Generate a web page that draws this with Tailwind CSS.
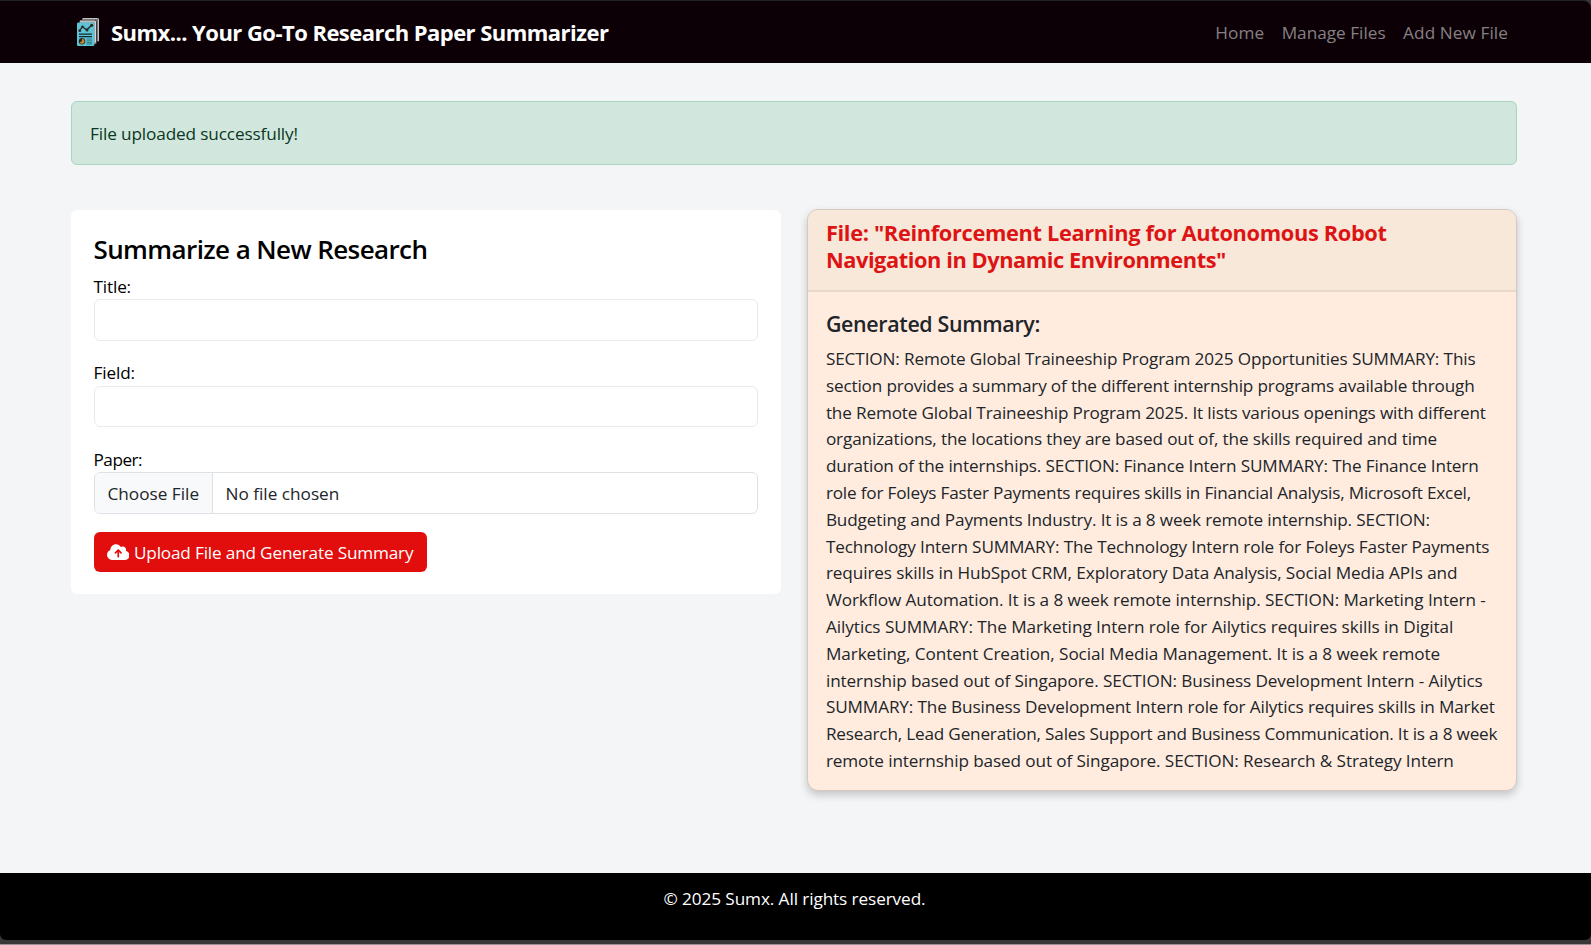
<!DOCTYPE html>
<html lang="en">
<head>
<meta charset="utf-8">
<title>Sumx</title>
<script src="https://cdn.jsdelivr.net/npm/@tailwindcss/browser@4"></script>
</head>
<body class="flex h-[945px] flex-col overflow-hidden bg-[#f3f5f7] font-['Open_Sans','Noto_Sans',sans-serif] text-[17.2px] leading-[26.8px] text-[#212529]">
<header class="h-[63px] shrink-0 bg-[#3a3a3c]">
  <nav class="flex h-[63px] items-center justify-between rounded-tr-lg border-t border-[#222024] bg-[#0c0006] pr-[83px] pl-[77px] text-white">
    <a class="flex items-center">
      <svg class="h-[28px] w-[22px]" viewBox="0 0 22 28">
        <rect x="5" y="0" width="17" height="23.500" rx="1" fill="#77777a"/>
        <path d="M6 .5h14.500M21.500 1v22" stroke="#c4c4c6" stroke-width="1"/>
        <rect x="2.500" y="2.500" width="17" height="23.500" rx="1" fill="#a6a6a8" stroke="#26262a" stroke-width=".8"/>
        <path d="M3 3h15M18.500 3v21" stroke="#d5d5d8" stroke-width="1"/>
        <rect x="0" y="4.500" width="17.300" height="23.500" rx="1.200" fill="#5bc5d5"/>
        <path d="M2.800 12.500L5.300 8.800l4.500 3L14.800 7" fill="none" stroke="#20272b" stroke-width="1.300"/>
        <g fill="#332522"><circle cx="2.800" cy="12.700" r="1.400"/><circle cx="5.500" cy="8.700" r="1.300"/><circle cx="10" cy="12" r="1.500"/><circle cx="14.700" cy="7.300" r="1.500"/></g>
        <path d="M2 16.200h13M2 18.700h13" stroke="#15292f" stroke-width="1.200"/>
        <circle cx="5" cy="23.300" r="3.200" fill="#2c2620"/>
        <path d="M5 23.300V20.800a2.500 2.500 0 1 1-2.300 3.600z" fill="#c98a35"/>
        <path d="M9.500 21h5.700M9.500 22.800h5.700M9.500 24.600h5.700M9.500 26h5.700" stroke="#2d6470" stroke-width=".8"/>
      </svg>
      <span class="ml-[12px] text-[22px] leading-[34px] font-bold tracking-[-0.540px] whitespace-nowrap">Sumx... Your Go-To Research Paper Summarizer</span>
    </a>
    <div class="flex gap-[17.500px] pt-[2px] whitespace-nowrap text-[#868083]">
      <a class="tracking-[0.060px]">Home</a>
      <a>Manage Files</a>
      <a class="tracking-[0.080px]">Add New File</a>
    </div>
  </nav>
</header>

<main class="min-h-0 grow px-[71px] pt-[38px]">
  <div class="mr-[3px] flex h-[64px] items-center rounded-[6px] border border-[#a8d4c0] bg-[#d1e7dd] pt-[2px] pl-[18px] tracking-[-0.130px] text-[#0a3622]">File uploaded successfully!</div>

  <div class="mt-[44px] mr-[3px] grid grid-cols-2 items-start gap-[27px]">
    <form class="mt-[0.500px] h-[384.500px] rounded-[6px] bg-white px-[22.500px] pt-[22px] text-black">
      <h3 class="h-[42px] text-[26px] leading-[34px] font-semibold tracking-[-0.600px] whitespace-nowrap">Summarize a New Research</h3>
      <label class="block h-[25.800px] tracking-[-0.160px]">Title:</label>
      <div class="h-[41.500px] rounded-[6px] border border-[#e9eaec]"></div>
      <label class="mt-[19px] block h-[25.800px] tracking-[-0.120px]">Field:</label>
      <div class="h-[41.500px] rounded-[6px] border border-[#e9eaec]"></div>
      <label class="mt-[19.500px] block h-[25.800px] tracking-[-0.500px]">Paper:</label>
      <div class="flex h-[41.500px] overflow-hidden rounded-[6px] border border-[#dee2e6] leading-[41px] text-[#212529]">
        <span class="w-[118px] border-r border-[#dee2e6] bg-[#f8f9fa] pl-[13px]">Choose File</span>
        <span class="pl-[13px]">No file chosen</span>
      </div>
      <button type="button" class="mt-[18px] flex h-[40.500px] w-[333px] items-center rounded-[6px] bg-[#e20d0d] pl-[13px] text-white">
        <svg class="h-[18px] w-[22.500px]" viewBox="0 0 640 512"><path fill="currentColor" fill-rule="evenodd" d="M144 480C64.500 480 0 415.500 0 336c0-62.800 40.200-116.200 96.200-135.900-.1-2.700-.2-5.400-.2-8.100 0-88.400 71.600-160 160-160 59.300 0 111 32.200 138.700 80.200C409.900 102 428.300 96 448 96c53 0 96 43 96 96 0 12.200-2.300 23.800-6.400 34.600C596 238.400 640 290.100 640 352c0 70.700-57.300 128-128 128H144zm79-217c-9.400 9.400-9.400 24.600 0 33.900s24.600 9.400 33.900 0l39-39V392c0 13.300 10.700 24 24 24s24-10.700 24-24V257.900l39 39c9.400 9.400 24.600 9.400 33.900 0s9.400-24.600 0-33.900l-80-80c-9.400-9.400-24.600-9.400-33.900 0l-80 80z"/></svg>
        <span class="ml-[5px] pt-[2px] tracking-[-0.180px] whitespace-nowrap">Upload File and Generate Summary</span>
      </button>
    </form>

    <section class="-ml-[0.600px] h-[582px] overflow-hidden rounded-[11px] border border-[#d6c9c0] bg-[#ffecdf] whitespace-nowrap shadow-[0_4px_9px_rgba(0,0,0,0.2)]">
      <div class="h-[82px] border-b-2 border-[#ead9cb] bg-[#f7e8da] pt-[10px] pl-[18px] text-[21.800px] leading-[26.800px] font-bold text-[#dd1414]">
        <p class="tracking-[-0.340px]">File: "Reinforcement Learning for Autonomous Robot</p>
        <p class="tracking-[-0.430px]">Navigation in Dynamic Environments"</p>
      </div>
      <div class="pt-[18.500px] pl-[18px] text-[17.160px]">
        <h5 class="h-[35.500px] text-[21.400px] leading-[26.800px] font-semibold tracking-[-0.340px]">Generated Summary:</h5>
        <p class="tracking-[-0.118px]">SECTION: Remote Global Traineeship Program 2025 Opportunities SUMMARY: This</p>
        <p class="tracking-[-0.161px]">section provides a summary of the different internship programs available through</p>
        <p class="tracking-[-0.158px]">the Remote Global Traineeship Program 2025. It lists various openings with different</p>
        <p class="tracking-[-0.126px]">organizations, the locations they are based out of, the skills required and time</p>
        <p class="tracking-[-0.131px]">duration of the internships. SECTION: Finance Intern SUMMARY: The Finance Intern</p>
        <p class="tracking-[-0.188px]">role for Foleys Faster Payments requires skills in Financial Analysis, Microsoft Excel,</p>
        <p class="tracking-[-0.136px]">Budgeting and Payments Industry. It is a 8 week remote internship. SECTION:</p>
        <p class="tracking-[-0.140px]">Technology Intern SUMMARY: The Technology Intern role for Foleys Faster Payments</p>
        <p class="tracking-[-0.099px]">requires skills in HubSpot CRM, Exploratory Data Analysis, Social Media APIs and</p>
        <p class="tracking-[-0.091px]">Workflow Automation. It is a 8 week remote internship. SECTION: Marketing Intern -</p>
        <p class="tracking-[-0.045px]">Ailytics SUMMARY: The Marketing Intern role for Ailytics requires skills in Digital</p>
        <p class="tracking-[-0.080px]">Marketing, Content Creation, Social Media Management. It is a 8 week remote</p>
        <p class="tracking-[-0.097px]">internship based out of Singapore. SECTION: Business Development Intern - Ailytics</p>
        <p class="tracking-[-0.130px]">SUMMARY: The Business Development Intern role for Ailytics requires skills in Market</p>
        <p class="tracking-[-0.189px]">Research, Lead Generation, Sales Support and Business Communication. It is a 8 week</p>
        <p class="tracking-[-0.108px]">remote internship based out of Singapore. SECTION: Research &amp; Strategy Intern</p>
      </div>
    </section>
  </div>
</main>

<footer class="h-[72px] shrink-0 border-b border-[#98929a] bg-[#383838]">
  <div class="h-[67px] rounded-b-[6px] bg-black pt-[13px] pr-[2px] text-center tracking-[-0.098px] text-white">© 2025 Sumx. All rights reserved.</div>
</footer>
</body>
</html>
